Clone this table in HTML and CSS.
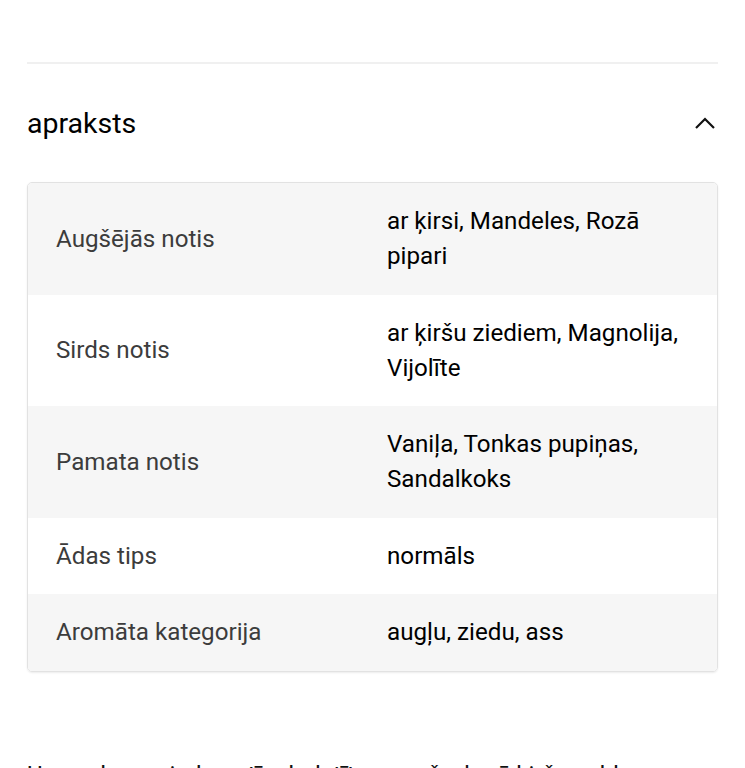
FILE: index.html
```html
<!DOCTYPE html>
<html lang="lv">
<head>
<meta charset="utf-8">
<link rel="stylesheet" href="styles.css">
</head>
<body>
<div class="page">
  <hr class="divider">
  <div class="section-head">
    <h2 class="title">apraksts</h2>
    <svg class="chevron" width="22" height="16" viewBox="0 0 22 16"><path d="M2 13 L11 4 L20 13" fill="none" stroke="#111" stroke-width="2.2"/></svg>
  </div>
  <div class="card">
    <div class="row shade"><div class="label">Augšējās notis</div><div class="value">ar ķirsi, Mandeles, Rozā pipari</div></div>
    <div class="row"><div class="label">Sirds notis</div><div class="value">ar ķiršu ziediem, Magnolija, Vijolīte</div></div>
    <div class="row shade"><div class="label">Pamata notis</div><div class="value">Vaniļa, Tonkas pupiņas, Sandalkoks</div></div>
    <div class="row"><div class="label">Ādas tips</div><div class="value">normāls</div></div>
    <div class="row shade"><div class="label">Aromāta kategorija</div><div class="value">augļu, ziedu, ass</div></div>
  </div>
  <p class="desc">Uz augļu un ziedu notīm balstīta smarža, kurā ķiršu saldums satiekas ar dziļu, siltu pamatu.</p>
</div>
</body>
</html>
```
FILE: styles.css
```css
html, body { margin: 0; padding: 0; background: #fff; }
body { font-family: Roboto, "Liberation Sans", sans-serif; color: #111; }
.page { padding: 62px 27px 0 27px; }
.divider { border: 0; height: 2px; background: #f0f0f0; margin: 0; }
.section-head { display: flex; align-items: center; justify-content: space-between; height: 118px; }
.title { font-size: 28.5px; font-weight: 400; margin: 0; color: #000; }
.chevron { margin-right: 2px; }
.card { border: 1px solid #e2e2e2; border-radius: 5px; box-shadow: 0 1px 2px rgba(0,0,0,0.08); overflow: hidden; }
.row { display: grid; grid-template-columns: 331px 1fr; padding: 21px 29px 20.5px 28px; font-size: 24.2px; line-height: 35px; background: #fff; }
.row.shade { background: #f6f6f6; }
.label { color: #3c3c3c; align-self: center; }
.value { color: #000; }
.desc { font-size: 24px; line-height: 35px; margin: 86px 0 0 0; color: #111; }
```
